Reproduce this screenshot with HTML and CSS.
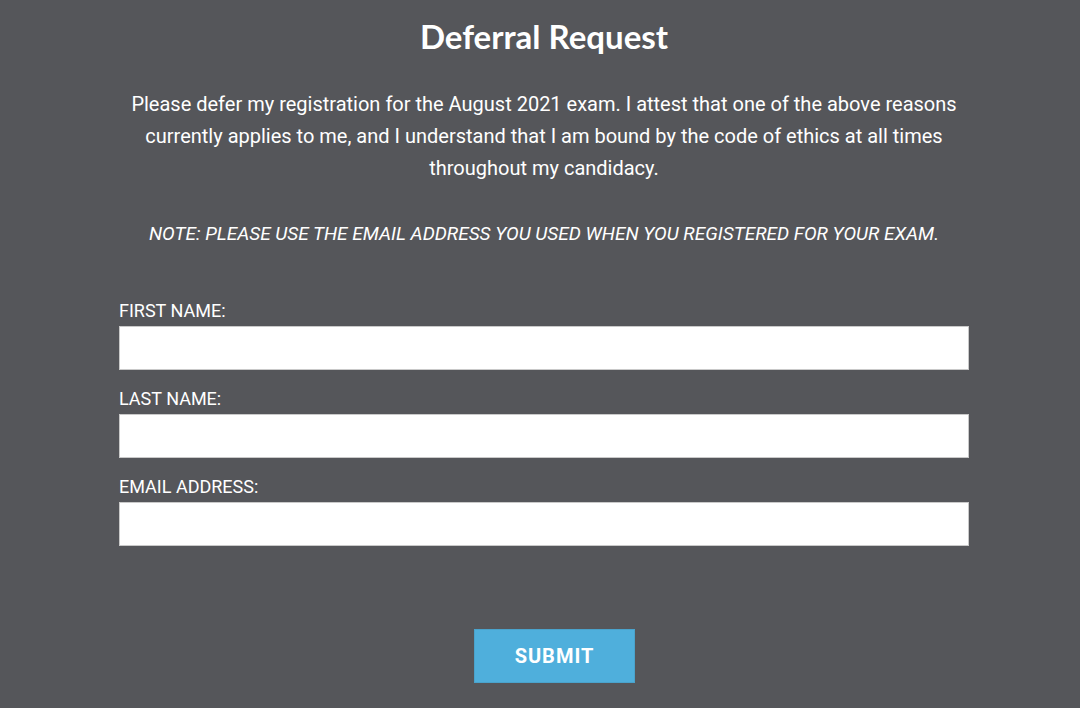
FILE: index.html
```html
<!DOCTYPE html>
<html>
<head>
<meta charset="utf-8">
<link rel="stylesheet" href="styles.css">
</head>
<body>
<div class="page">
  <h1 class="title">Deferral Request</h1>
  <p class="intro">Please defer my registration for the August 2021 exam. I attest that one of the above reasons currently applies to me, and I understand that I am bound by the code of ethics at all times throughout my candidacy.</p>
  <p class="note">NOTE: PLEASE USE THE EMAIL ADDRESS YOU USED WHEN YOU REGISTERED FOR YOUR EXAM.</p>
  <form class="form">
    <div class="field">
      <label class="label" for="fn">FIRST NAME:</label>
      <input class="input" id="fn" type="text">
    </div>
    <div class="field">
      <label class="label" for="ln">LAST NAME:</label>
      <input class="input" id="ln" type="text">
    </div>
    <div class="field">
      <label class="label" for="em">EMAIL ADDRESS:</label>
      <input class="input" id="em" type="email">
    </div>
    <div class="actions">
      <button class="submit" type="button">SUBMIT</button>
    </div>
  </form>
</div>
</body>
</html>
```

FILE: styles.css
```css
html, body {
  margin: 0;
  padding: 0;
  background: #55565a;
  height: 100%;
}
body {
  font-family: Roboto, "Noto Sans", sans-serif;
  color: #ffffff;
}
.page {
  padding: 0 111px 0 119px;
  display: flex;
  flex-direction: column;
}
.title {
  font-family: Lato, sans-serif;
  font-weight: 700;
  font-size: 33px;
  line-height: 40px;
  margin: 16px 0 0 0;
  text-align: center;
}
.intro {
  margin: 32px 0 0 0;
  font-size: 20px;
  line-height: 32px;
  text-align: center;
  padding: 0;
}
.note {
  margin: 34px 0 0 0;
  font-size: 19px;
  line-height: 32px;
  font-style: italic;
  text-align: center;
}
.form {
  margin-top: 49px;
  display: flex;
  flex-direction: column;
  gap: 17px;
}
.field {
  display: flex;
  flex-direction: column;
}
.label {
  font-size: 18px;
  line-height: 24px;
  margin-bottom: 3px;
}
.input {
  box-sizing: border-box;
  width: 100%;
  height: 44px;
  margin: 0;
  border: 1px solid #c9c9c9;
  background: #ffffff;
  padding: 0 10px;
}
.actions {
  display: flex;
  justify-content: center;
  padding-left: 21px;
  margin-top: 66px;
}
.submit {
  width: 161px;
  height: 54px;
  background: #4fafdc;
  border: 1px solid #4aa3cc;
  color: #ffffff;
  font-family: Roboto, sans-serif;
  font-weight: 700;
  font-size: 20px;
  letter-spacing: 1px;
  cursor: pointer;
}
```
